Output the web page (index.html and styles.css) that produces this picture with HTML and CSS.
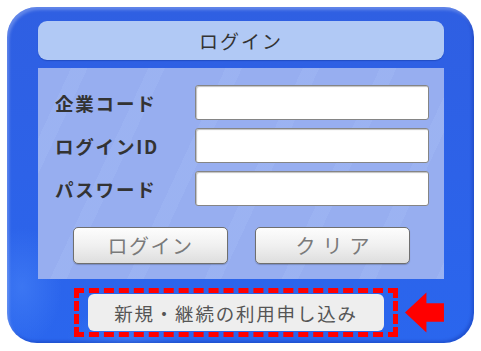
FILE: index.html
```html
<!DOCTYPE html>
<html lang="ja">
<head>
<meta charset="utf-8">
<link rel="stylesheet" href="styles.css">
</head>
<body>
<div class="panel">
  <div class="title">ログイン</div>
  <div class="content">
    <div class="row"><span class="label">企業コード</span><input class="field" type="text"></div>
    <div class="row"><span class="label">ログインID</span><input class="field" type="text"></div>
    <div class="row"><span class="label">パスワード</span><input class="field" type="password"></div>
    <div class="buttons">
      <button class="btn">ログイン</button>
      <button class="btn btn-clear">クリア</button>
    </div>
  </div>
  <div class="bottom">
    <div class="dash">
      <button class="apply">新規・継続の利用申し込み</button>
    </div>
    <svg class="arrow" width="40" height="41" viewBox="0 0 40 41">
      <polygon points="0,20.5 22,0 22,11 40,11 40,30 22,30 22,41" fill="#ff0000"/>
    </svg>
  </div>
</div>
</body>
</html>
```
FILE: styles.css
```css
html, body {
  margin: 0;
  padding: 0;
  background: #ffffff;
}
body {
  font-family: "Noto Sans CJK JP", "Noto Sans", sans-serif;
  width: 481px;
  height: 351px;
  overflow: hidden;
}
.panel {
  box-sizing: border-box;
  margin: 7px 0 0 7px;
  width: 467px;
  height: 336px;
  border-radius: 30px;
  background:
    radial-gradient(ellipse 60px 30px at 120px 330px, rgba(90,150,255,0.35), transparent),
    radial-gradient(ellipse 40px 60px at 15px 280px, rgba(90,150,255,0.35), transparent),
    linear-gradient(180deg, #2f5fe2 0%, #2d62e8 50%, #2a66ee 100%);
  box-shadow: inset 2px 3px 3px rgba(255,255,255,0.25), inset -2px -2px 3px rgba(0,20,120,0.25);
  padding: 14px 30px 0 31px;
  display: flex;
  flex-direction: column;
}
.title {
  height: 39px;
  border-radius: 9px;
  background: #b1c9f5;
  color: #333;
  font-size: 19px;
  letter-spacing: 2px;
  display: flex;
  align-items: center;
  justify-content: center;
  box-shadow: 0 1px 1px rgba(0,30,120,0.3);
}
.content {
  margin-top: 8px;
  height: 211px;
  box-sizing: border-box;
  background:
    repeating-linear-gradient(115deg, rgba(255,255,255,0) 0 30px, rgba(180,205,255,0.15) 30px 45px, rgba(255,255,255,0) 45px 70px),
    #97aef0;
  padding: 17px 15px 0 17px;
  display: flex;
  flex-direction: column;
  gap: 8px;
}
.row {
  display: flex;
  align-items: center;
  height: 35px;
}
.label {
  width: 140px;
  font-weight: bold;
  font-size: 18.5px;
  letter-spacing: 1.8px;
  color: #333;
}
.field {
  box-sizing: border-box;
  width: 234px;
  height: 35px;
  border: 1px solid #858585;
  border-radius: 3px;
  background: #fff;
  margin: 0;
  padding: 0;
  box-shadow: inset 1px 1px 1px rgba(0,0,0,0.25);
}
.buttons {
  display: flex;
  gap: 27px;
  margin-top: 13px;
  padding-left: 18px;
}
.btn {
  box-sizing: border-box;
  width: 155px;
  height: 37px;
  border: 1px solid #6f6f6f;
  border-radius: 5px;
  background: linear-gradient(180deg, #fdfdfd 0%, #f0f0f0 50%, #dedede 100%);
  color: #7a7a7a;
  font-family: "Noto Sans CJK JP", "Noto Sans", sans-serif;
  font-size: 20px;
  letter-spacing: 1.5px;
  padding: 0;
  box-shadow: 0 1px 1px rgba(0,0,0,0.2);
}
.btn-clear {
  letter-spacing: 7px;
  padding-left: 7px;
}
.bottom {
  margin-top: 9px;
  display: flex;
  align-items: center;
  padding-left: 36px;
  gap: 7px;
}
.dash {
  box-sizing: border-box;
  width: 332px;
  height: 49px;
  border: 5px dashed #ff0000;
  padding: 1px 9px;
  display: flex;
}
.apply {
  flex: 1;
  height: 37px;
  border: none;
  border-radius: 6px;
  background: #eeeeee;
  color: #555;
  font-family: "Noto Sans CJK JP", "Noto Sans", sans-serif;
  font-size: 18.5px;
  letter-spacing: 1.8px;
  padding: 0;
}
.arrow {
  display: block;
}
```
